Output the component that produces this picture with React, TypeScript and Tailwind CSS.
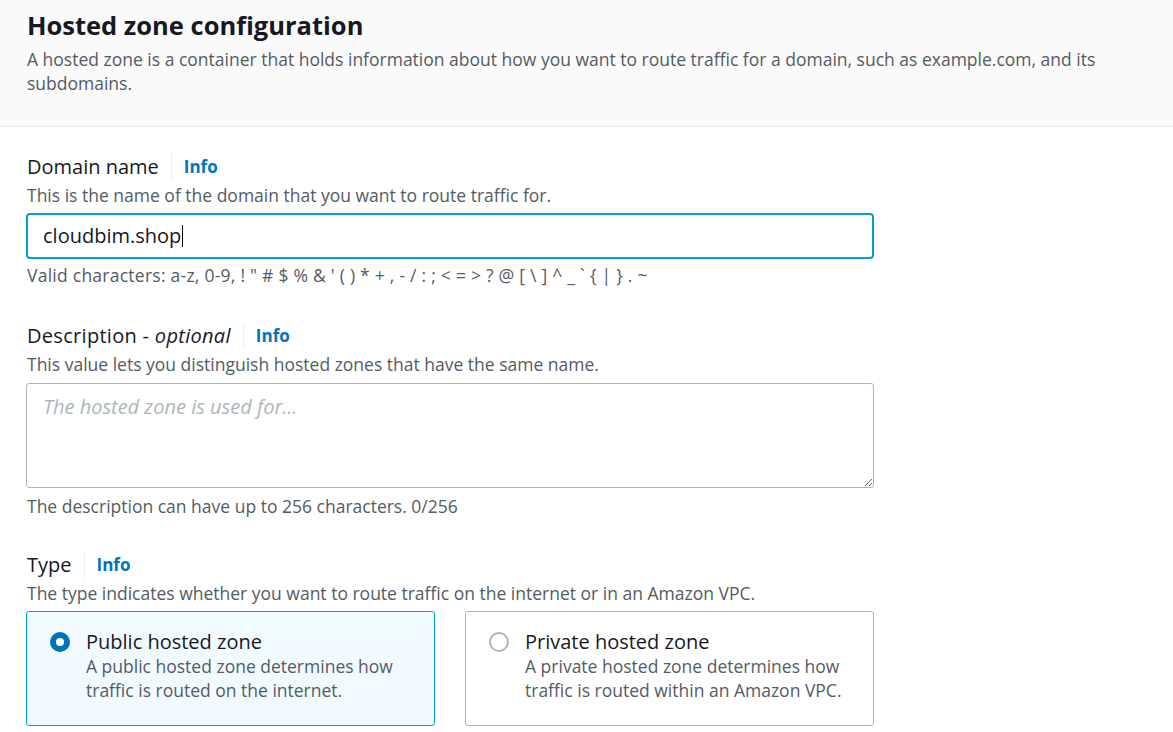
export default function App() {
  const font = { fontFamily: '"Open Sans", "Noto Sans", sans-serif' }
  return (
    <div className="min-h-screen bg-white text-[#16191f]" style={font}>
      {/* Header band */}
      <div className="bg-[#fafafa] border-b border-[#eaeded] px-[27px] pt-[8px] pb-[31px]">
        <h1 className="text-[25.5px] font-bold leading-[34px]">Hosted zone configuration</h1>
        <p className="mt-[5px] text-[17.5px] leading-[24px] text-[#545b64]">
          A hosted zone is a container that holds information about how you want to route traffic for a domain, such as example.com, and its subdomains.
        </p>
      </div>

      <div className="px-[26px] pt-[26px] w-[874px] box-content">
        {/* Domain name */}
        <div className="pl-px">
          <div className="flex items-center h-[28px]">
            <span className="text-[20px]">Domain name</span>
            <span className="mx-[12px] h-[26px] w-px bg-[#eaeded]" />
            <span className="text-[17px] font-bold text-[#0073bb]">Info</span>
          </div>
          <p className="text-[17.5px] leading-[24px] text-[#545b64] mt-[2px]">This is the name of the domain that you want to route traffic for.</p>
        </div>
        <div className="mt-[6px] h-[46px] w-[848px] rounded-[4px] border-2 border-[#00a1c9] flex items-center px-[15px] text-[20px]">
          cloudbim.shop<span className="ml-px h-[22px] w-px bg-black" />
        </div>
        <p className="pl-px mt-[5px] text-[17.5px] tracking-[0.25px] leading-[22px] text-[#545b64]">
          Valid characters: a-z, 0-9, ! " # $ % &amp; ' ( ) * + , - / : ; &lt; = &gt; ? @ [ \ ] ^ _ ` {'{'} | {'}'} . ~
        </p>

        {/* Description */}
        <div className="pl-px mt-[36px]">
          <div className="flex items-center h-[28px]">
            <span className="text-[20px] tracking-[0.3px]">Description - <i>optional</i></span>
            <span className="mx-[12px] h-[26px] w-px bg-[#eaeded]" />
            <span className="text-[17px] font-bold text-[#0073bb]">Info</span>
          </div>
          <p className="text-[17.5px] leading-[24px] text-[#545b64] mt-[2px]">This value lets you distinguish hosted zones that have the same name.</p>
        </div>
        <textarea
          className="block mt-[7px] h-[105px] w-[848px] rounded-[3px] border border-[#aab7b8] px-[16px] py-[8px] text-[20px] italic placeholder:text-[#aab7b8] outline-none"
          style={font}
          placeholder="The hosted zone is used for..."
        />
        <p className="pl-px mt-[6px] text-[17.5px] leading-[24px] text-[#545b64]">The description can have up to 256 characters. 0/256</p>

        {/* Type */}
        <div className="pl-px mt-[33px]">
          <div className="flex items-center h-[28px]">
            <span className="text-[20px]">Type</span>
            <span className="mx-[12px] h-[26px] w-px bg-[#eaeded]" />
            <span className="text-[17px] font-bold text-[#0073bb]">Info</span>
          </div>
          <p className="text-[17.5px] leading-[24px] text-[#545b64] mt-[2px]">The type indicates whether you want to route traffic on the internet or in an Amazon VPC.</p>
        </div>
        <div className="mt-[6px] grid grid-cols-2 gap-[30px] w-[848px]">
          {[
            { title: 'Public hosted zone', desc: 'A public hosted zone determines how traffic is routed on the internet.', on: true },
            { title: 'Private hosted zone', desc: 'A private hosted zone determines how traffic is routed within an Amazon VPC.', on: false },
          ].map(c => (
            <div
              key={c.title}
              className={`h-[115px] rounded-[3px] border flex gap-[16px] px-[23px] pt-[18px] ${
                c.on ? 'bg-[#f1faff] border-[#00a1c9]' : 'bg-white border-[#aab7b8]'
              }`}
            >
              <div className="pt-[2px]">
                {c.on ? (
                  <div className="h-[20px] w-[20px] rounded-full border-[6px] border-[#0073bb] bg-white" />
                ) : (
                  <div className="h-[20px] w-[20px] rounded-full border-2 border-[#aab7b8] bg-white" />
                )}
              </div>
              <div>
                <div className="text-[20px] leading-[24px]">{c.title}</div>
                <div className="text-[17.5px] leading-[24px] text-[#545b64] w-[335px]">{c.desc}</div>
              </div>
            </div>
          ))}
        </div>
      </div>
    </div>
  )
}
